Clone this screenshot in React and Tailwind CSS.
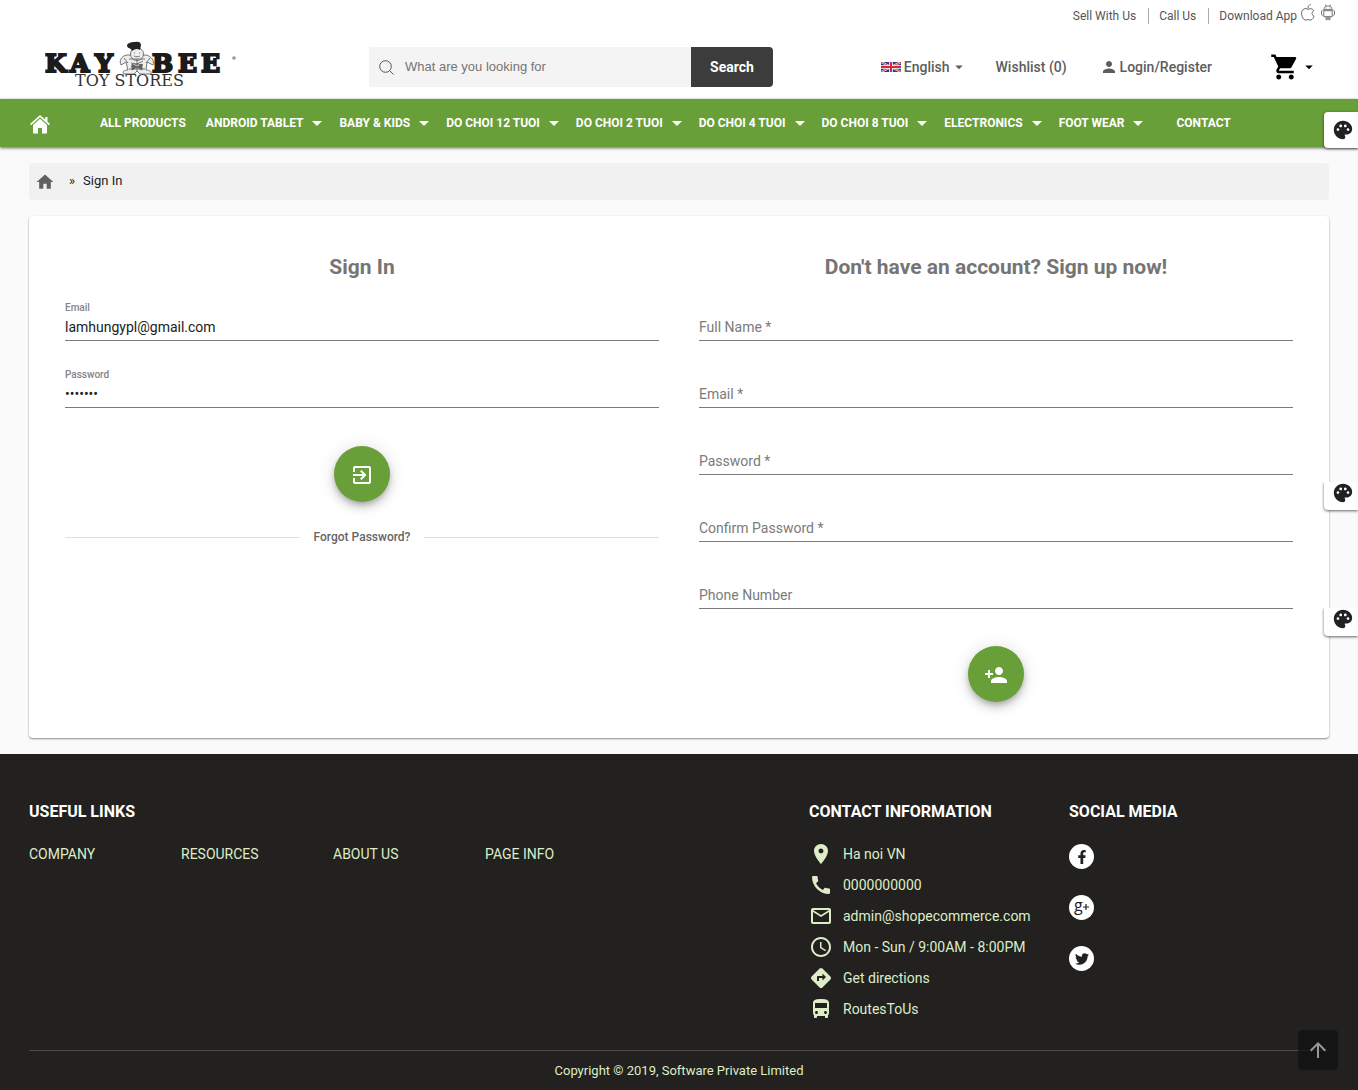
import React from "react";
import {
  MdExitToApp, MdPersonAdd, MdPalette, MdHome, MdShoppingCart, MdArrowDropDown, MdPerson,
  MdPlace, MdCall, MdMailOutline, MdAccessTime, MdDirections, MdDirectionsBus, MdArrowUpward,
} from "react-icons/md";
import { FaFacebookF, FaTwitter } from "react-icons/fa";

const menus = ["ANDROID TABLET", "BABY & KIDS", "DO CHOI 12 TUOI", "DO CHOI 2 TUOI", "DO CHOI 4 TUOI", "DO CHOI 8 TUOI", "ELECTRONICS", "FOOT WEAR"];

const contacts = [
  [MdPlace, "Ha noi VN"],
  [MdCall, "0000000000"],
  [MdMailOutline, "admin@shopecommerce.com"],
  [MdAccessTime, "Mon - Sun / 9:00AM - 8:00PM"],
  [MdDirections, "Get directions"],
  [MdDirectionsBus, "RoutesToUs"],
];

function Logo() {
  return (
    <svg width="194" height="48" viewBox="0 0 194 48" role="img" aria-label="Kay Bee Toy Stores">
      <g fill="#1c1a1b" stroke="#1c1a1b" strokeWidth="2" fontFamily="DejaVu Serif" fontWeight="700" fontSize="25">
        <text x="0" y="31">K</text>
        <text x="25" y="31">A</text>
        <text x="50" y="31">Y</text>
        <text x="107" y="31">B</text>
        <text x="133" y="31">E</text>
        <text x="156" y="31">E</text>
        <path d="M178 17h12" stroke="none" />
      </g>
      <text x="30" y="45" fill="#333" fontFamily="DejaVu Serif" fontSize="16">TOY STORES</text>
      <circle cx="189" cy="17" r="1.8" fill="#999" />
      <g stroke="#555" strokeWidth="0.8" fill="#eee">
        <path d="M82 14c-6 1-8 6-6 10l5-3 2 8c-5 0-6 3-4 4h10l3-3 3 3h11c1-2-1-4-5-4l1-8 6 3c2-4-2-9-7-10z" />
        <circle cx="92" cy="13" r="6.500" />
        <path d="M84 18h16M86 22l12 2M98 20l-12 6M84 28h16M92 18v12M79 17l4 5M105 17l-4 5" fill="none" />
        <path d="M89 12h1M94 12h1M89 15c2 1 4 1 6 0" fill="none" />
        <path d="M87 23l5 3 5-3v6l-5-3-5 3z" fill="#666" />
      </g>
      <path d="M82 5c0-3 4-4 8-4 3-1 6 0 6 3l-1 5c-3-2-5-1-8 1 0-3-4-2-5-5z" fill="#222" />
    </svg>
  );
}

function Flag() {
  return (
    <svg width="20" height="10" viewBox="0 0 20 10" aria-hidden="true">
      <path fill="#24408e" d="M0 0h20v10H0z" />
      <path d="M0 0l20 10M20 0L0 10" stroke="#fff" strokeWidth="2" />
      <path d="M0 0l20 10M20 0L0 10" stroke="#e0354a" strokeWidth="1" />
      <path d="M10 0v10M0 5h20" stroke="#fff" strokeWidth="3.600" />
      <path d="M10 0v10M0 5h20" stroke="#d8263c" strokeWidth="2" />
    </svg>
  );
}

function HouseIcon() {
  return (
    <svg width="20" height="19" viewBox="0 0 20 19" fill="#fff" aria-hidden="true">
      <path d="M10 0L0 9l1.100 1.200L10 2.300l8.900 7.900L20 9l-2.500-2.300V2h-2.300v2.600z" />
      <path d="M10 3.800L3 10v8.500h5V13h4v5.500h5V10z" />
    </svg>
  );
}

function AppleIcon() {
  return (
    <svg width="14" height="17" viewBox="0 0 14 17" fill="none" stroke="#666" strokeWidth="1" aria-hidden="true">
      <path d="M7 5.300C5.500 4.500 4.300 4.300 3 5 .8 6 .3 8.300.7 10.700c.4 2.300 1.700 4.800 3.300 5.300 1 .3 2-.4 3-.4s2 .7 3 .4c1.300-.4 2.500-2 3-3.800-2.300-1-2.600-4.200-.2-5.500C11.500 4.600 9.300 4.200 7 5.300z" />
      <path d="M7 4.300C6.900 2.300 8 .8 9.700.4" />
    </svg>
  );
}

function AndroidIcon() {
  return (
    <svg width="14" height="17" viewBox="0 0 14 17" fill="none" stroke="#666" strokeWidth="0.9" aria-hidden="true">
      <path d="M2.800 5.600C3 3.300 4.700 2 7 2s4 1.300 4.200 3.600zM4.300.5l1 1.800M9.700.5l-1 1.800M2.800 6.700h8.400v6H2.800zM5 12.700v3h1.300v-3M7.700 12.700v3H9v-3M2.500 6.500H1.400a.9.900 0 0 0-.9.900v3c0 .8 1.300 1.200 2 .5M11.500 6.500h1.100c.5 0 .9.400.9.900v3c0 .8-1.300 1.200-2 .5" />
      <path d="M5.300 3.900v.5M8.700 3.900v.5" />
    </svg>
  );
}

function Field({ id, label, type = "text", value }) {
  const input = (
    <input
      id={id}
      type={type}
      defaultValue={value}
      className="col-start-1 row-start-1 h-[27px] w-full border-b border-[#7b7b7b] bg-transparent pb-px text-sm text-[#212121] outline-none"
    />
  );
  return (
    <div className="flex h-[67px] flex-col justify-end">
      {value ? (
        <>
          <label htmlFor={id} className="text-[10px] leading-3 font-medium text-[#858585]">{label}</label>
          {input}
        </>
      ) : (
        <div className="grid">
          {input}
          <label htmlFor={id} className="col-start-1 row-start-1 h-[27px] text-sm leading-[26px] text-[#7b7b7b]">{label}</label>
        </div>
      )}
    </div>
  );
}

function RoundButton({ label, children }) {
  return (
    <button aria-label={label} className="mx-auto flex size-14 items-center justify-center rounded-full bg-[#689f38] pt-0.5 text-2xl text-white shadow-[0_3px_5px_-1px_rgba(0,0,0,0.2),0_6px_10px_rgba(0,0,0,0.14),0_1px_18px_rgba(0,0,0,0.12)]">
      {children}
    </button>
  );
}

function PaletteTab({ className }) {
  return (
    <button aria-label="Theme colors" className={"absolute right-0 flex w-[34px] justify-center bg-white pl-1 text-[22px] text-[#212121] shadow-[0_1px_3px_rgba(0,0,0,0.6)] " + className}>
      <MdPalette />
    </button>
  );
}

export default function App() {
  return (
    <div className="relative min-h-screen bg-[#fafafa] text-sm text-[#212121]" style={{ fontFamily: "Roboto, sans-serif" }}>
      <header className="bg-white">
        <div className="flex h-8 items-center justify-end pr-[23px] text-xs text-[#555]">
          <a href="#sell" className="border-r border-[#aaa] pr-3">Sell With Us</a>
          <a href="#call" className="border-r border-[#aaa] px-3 pl-2.5">Call Us</a>
          <a href="#app" className="pl-2.5">Download App</a>
          <span className="ml-1 flex gap-1.5 pb-2"><AppleIcon /><AndroidIcon /></span>
        </div>
        <div className="flex h-[67px] items-center pt-[3px] pl-[45px]">
          <div className="w-[324px] pb-1"><Logo /></div>
          <form className="flex h-10 w-[404px]">
            <div className="flex flex-1 items-center bg-[#f4f4f4] pl-2.5">
              <svg width="15" height="15" viewBox="0 0 15 15" fill="none" stroke="#555" aria-hidden="true">
                <circle cx="6.500" cy="6.500" r="5.800" /><path d="M10.700 10.700l3.800 3.800" />
              </svg>
              <input aria-label="Search products" placeholder="What are you looking for" className="ml-[11px] min-w-0 flex-1 bg-transparent text-[13px] outline-none placeholder:text-[#757575]" style={{ fontFamily: "Liberation Sans, sans-serif" }} />
            </div>
            <button type="button" className="w-[82px] rounded-r bg-[#3c3c3c] font-bold text-white">Search</button>
          </form>
          <div className="ml-auto flex items-center pr-10 font-medium text-[#5d5d5d]">
            <button className="flex items-center"><Flag /><span className="ml-[3px]">English</span><MdArrowDropDown className="text-lg" /></button>
            <a href="#wishlist" className="ml-7">Wishlist (0)</a>
            <a href="#login" className="ml-[33px] flex items-center gap-0.5"><MdPerson className="text-lg" />Login/Register</a>
            <button aria-label="Cart" className="ml-[58px] flex items-center text-black"><MdShoppingCart className="text-[30px]" /><MdArrowDropDown className="text-lg" /></button>
          </div>
        </div>
      </header>

      <nav className="flex h-12 items-center bg-[#689f38] pl-[30px] text-xs font-bold text-white shadow-[0_1px_3px_rgba(0,0,0,0.6)]">
        <a href="#home" aria-label="Home" className="pt-0.5"><HouseIcon /></a>
        <a href="#all" className="mr-5 ml-[50px]">ALL PRODUCTS</a>
        {menus.map((m) => (
          <button key={m} className="mr-2.5 flex items-center gap-0.5 whitespace-nowrap">{m}<MdArrowDropDown className="text-2xl" /></button>
        ))}
        <a href="#contact" className="ml-4">CONTACT</a>
      </nav>

      <main className="px-[29px] py-4">
        <div className="flex h-[37px] items-center rounded bg-[#f1f1f1] pl-1.5 text-[13px]">
          <a href="#home" aria-label="Home"><MdHome className="text-xl text-[#616161]" /></a>
          <span className="ml-3.5">»</span>
          <span className="ml-2">Sign In</span>
        </div>

        <div className="mt-4 grid grid-cols-2 gap-10 rounded bg-white p-9 shadow-[0_1px_2px_rgba(0,0,0,0.45)]">
          <form>
            <h2 className="text-center text-[21px] leading-[30px] font-bold text-[#757575]">Sign In</h2>
            <div className="-mt-2">
              <Field id="login-email" label="Email" type="email" value="lamhungypl@gmail.com" />
              <Field id="login-password" label="Password" type="password" value="1234567" />
            </div>
            <div className="pt-[38px]"><RoundButton label="Sign in"><MdExitToApp /></RoundButton></div>
            <div className="mt-[27px] flex items-center gap-3.5 text-xs font-medium text-[#666]">
              <span className="h-px flex-1 bg-[#e0e0e0]" />
              <a href="#forgot">Forgot Password?</a>
              <span className="h-px flex-1 bg-[#e0e0e0]" />
            </div>
          </form>
          <form>
            <h2 className="text-center text-[21px] leading-[30px] font-bold text-[#757575]">Don't have an account? Sign up now!</h2>
            <div className="-mt-2">
              <Field id="name" label="Full Name *" />
              <Field id="email" label="Email *" type="email" />
              <Field id="password" label="Password *" type="password" />
              <Field id="confirm" label="Confirm Password *" type="password" />
              <Field id="phone" label="Phone Number" type="tel" />
            </div>
            <div className="pt-[37px]"><RoundButton label="Sign up"><MdPersonAdd /></RoundButton></div>
          </form>
        </div>
      </main>

      <footer className="bg-[#22211f] px-[29px] pt-[46px] text-[#dcedc8]">
        <div className="flex h-[250px]">
          <section className="w-3/5 pr-5">
            <h3 className="text-base font-bold text-white">USEFUL LINKS</h3>
            <div className="mt-5 grid grid-cols-5">
              <a href="#company">COMPANY</a>
              <a href="#resources">RESOURCES</a>
              <a href="#about">ABOUT US</a>
              <a href="#page">PAGE INFO</a>
            </div>
          </section>
          <section className="w-1/5">
            <h3 className="text-base font-bold text-white">CONTACT INFORMATION</h3>
            <ul className="mt-3.5">
              {contacts.map(([Icon, text]) => (
                <li key={text} className="flex h-[31px] items-center gap-2.5 whitespace-nowrap"><Icon className="text-2xl" />{text}</li>
              ))}
            </ul>
          </section>
          <section className="w-1/5">
            <h3 className="text-base font-bold text-white">SOCIAL MEDIA</h3>
            <div className="mt-5 flex flex-col gap-[26px] text-[#22211f]">
              <a href="#facebook" aria-label="Facebook" className="flex size-[25px] items-center justify-center rounded-full bg-white"><FaFacebookF /></a>
              <a href="#google" aria-label="Google Plus" className="flex size-[25px] items-center justify-center rounded-full bg-white">
                <svg width="19" height="23" viewBox="0 0 19 23" aria-hidden="true">
                  <text x="2" y="15" fontFamily="Open Sans" fontSize="16" fontWeight="500" fill="#22211f">g</text>
                  <path d="M11 11h6M14 8v6" stroke="#22211f" strokeWidth="1.200" />
                </svg>
              </a>
              <a href="#twitter" aria-label="Twitter" className="flex size-[25px] items-center justify-center rounded-full bg-white"><FaTwitter /></a>
            </div>
          </section>
        </div>
        <p className="border-t border-[#4b4a48] py-2.5 pb-[9px] text-center text-[13px] leading-5">Copyright © 2019, Software Private Limited</p>
      </footer>

      <PaletteTab className="top-28 h-9 items-center rounded-l" />
      <PaletteTab className="top-[482px] h-7 items-start rounded-bl [clip-path:inset(0_0_-4px_-4px)]" />
      <PaletteTab className="top-[608px] h-7 items-start rounded-bl [clip-path:inset(0_0_-4px_-4px)]" />
      <button aria-label="Back to top" className="absolute right-5 bottom-5 flex size-10 items-center justify-center rounded bg-[#111013]/75 text-2xl text-[#999]"><MdArrowUpward /></button>
    </div>
  );
}
